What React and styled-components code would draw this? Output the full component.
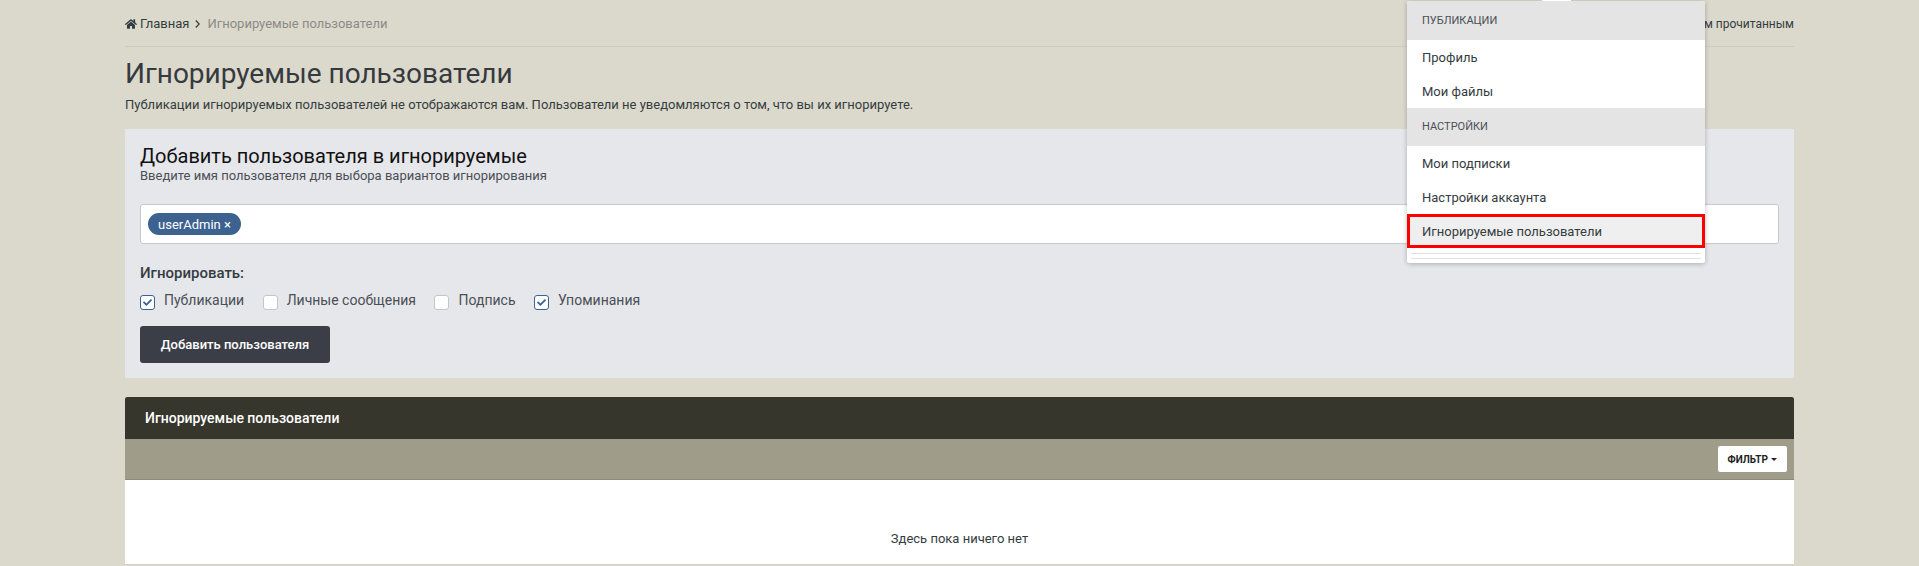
import styled, { createGlobalStyle } from "styled-components";
import { FaHome, FaCheck } from "react-icons/fa";

const GlobalStyle = createGlobalStyle`
  html, body {
    margin: 0;
    height: 566px;
    overflow: hidden;
    background: #dbd9cc;
    font-family: Roboto, "Liberation Sans", sans-serif;
    font-size: 13px;
    color: #353c41;
  }
`;

const Page = styled.div`
  position: relative;
  height: 566px;
  overflow: hidden;
  padding: 0 125px;
`;

const TopBar = styled.div`
  display: flex;
  justify-content: space-between;
  align-items: center;
  height: 47px;
  padding-top: 1px;
  box-sizing: border-box;
  border-bottom: 1px solid #cdcbbe;
`;

const Crumbs = styled.div`
  display: flex;
  align-items: center;
  gap: 3px;
  font-size: 13px;
  svg { font-size: 12px; }
`;

const CrumbSep = styled.svg`
  width: 5px;
  height: 8px;
  margin: 0 4px 0 3px;
  fill: none;
  stroke: #353c41;
  stroke-width: 1.2;
`;

const CrumbCurrent = styled.span`
  color: #8b8b86;
`;

const MarkRead = styled.span`
  font-size: 12px;
`;

const Title = styled.h1`
  margin: 9px 0 0;
  font-size: 28px;
  font-weight: 400;
  line-height: 36px;
  color: #363a3e;
`;

const Lead = styled.p`
  margin: 4px 0 0;
  font-size: 13px;
  line-height: 18px;
`;

const FormPanel = styled.section`
  margin-top: 15px;
  height: 249px;
  box-sizing: border-box;
  padding: 15px;
  background: #e6e7eb;
`;

const FormTitle = styled.h2`
  margin: 0;
  font-size: 20px;
  font-weight: 400;
  line-height: 24px;
  color: #111;
`;

const FormHint = styled.p`
  margin: 0;
  font-size: 13px;
  line-height: 16px;
  color: #4a4f55;
`;

const TagInput = styled.div`
  display: flex;
  align-items: center;
  margin-top: 20px;
  height: 40px;
  box-sizing: border-box;
  padding: 0 7px;
  background: #fff;
  border: 1px solid #c8c9cc;
  border-radius: 3px;
`;

const Tag = styled.span`
  display: inline-flex;
  align-items: center;
  height: 22px;
  padding: 0 10px;
  border-radius: 11px;
  background: #3d628f;
  color: #fff;
  font-size: 13px;
`;

const FieldLabel = styled.div`
  margin-top: 20px;
  font-size: 15px;
  font-weight: 500;
  line-height: 18px;
`;

const Options = styled.div`
  display: flex;
  gap: 18.5px;
  margin-top: 9px;
`;

const Option = styled.label`
  display: flex;
  align-items: center;
  gap: 9px;
  height: 18px;
  font-size: 14px;
  color: #4a4f55;
`;

const Check = styled.span`
  display: flex;
  align-items: center;
  justify-content: center;
  box-sizing: border-box;
  width: 15px;
  height: 15px;
  margin-top: 5px;
  background: #fff;
  border: 1px solid ${(p) => (p.$on ? "#3d628f" : "#c4c5c8")};
  border-radius: 3px;
  color: #3d628f;
  font-size: 9px;
`;

const SubmitButton = styled.button`
  display: block;
  margin-top: 17px;
  width: 190px;
  height: 37px;
  border: 0;
  border-radius: 3px;
  background: #3c3e47;
  color: #fff;
  font-family: inherit;
  font-size: 13px;
  font-weight: 500;
`;

const ListPanel = styled.section`
  margin-top: 19px;
  background: #fff;
  border-bottom: 1px solid #d0d0cc;
`;

const ListHeader = styled.div`
  display: flex;
  align-items: center;
  height: 42px;
  padding: 0 20px;
  border-radius: 2px 2px 0 0;
  background: #37362d;
  color: #fff;
  font-size: 14px;
  font-weight: 500;
`;

const ListToolbar = styled.div`
  display: flex;
  align-items: center;
  justify-content: flex-end;
  height: 41px;
  padding: 0 7px;
  box-sizing: border-box;
  background: #9f9c89;
  border-bottom: 1px solid #8c8a78;
`;

const FilterButton = styled.button`
  display: flex;
  align-items: center;
  gap: 3px;
  height: 26px;
  padding: 0 10px;
  border: 0;
  border-radius: 2px;
  background: #fff;
  color: #222;
  font-family: inherit;
  font-size: 10px;
  font-weight: 700;
`;

const Caret = styled.span`
  width: 0;
  height: 0;
  border-left: 3px solid transparent;
  border-right: 3px solid transparent;
  border-top: 3px solid #222;
`;

const Empty = styled.div`
  height: 84px;
  padding-top: 50px;
  box-sizing: border-box;
  text-align: center;
  font-size: 13px;
  line-height: 18px;
`;

const Menu = styled.nav`
  position: absolute;
  top: 1px;
  left: 1407px;
  width: 298px;
  height: 262px;
  background: #fff;
  border-radius: 2px;
  box-shadow: 0 1px 5px rgba(0, 0, 0, 0.25);
`;

const MenuArrow = styled.span`
  position: absolute;
  top: -1px;
  left: 135px;
  width: 29px;
  height: 1px;
  background: #fff;
`;

const MenuHeading = styled.div`
  display: flex;
  align-items: center;
  height: ${(p) => (p.$first ? "39px" : "38px")};
  padding: 0 15px 1px;
  box-sizing: border-box;
  background: #e4e4e4;
  font-size: 11px;
  color: #4a4f55;
`;

const MenuItem = styled.a`
  display: flex;
  align-items: center;
  height: 34px;
  padding: 0 15px;
  box-sizing: border-box;
  font-size: 13px;
  color: #353c41;
`;

const ActiveItem = styled(MenuItem)`
  padding: 0 12px;
  background: #efefef;
  border: 3px solid #f00;
`;

const MenuRule = styled.div`
  height: 4px;
  margin: 5px 4px 0;
  border-top: 1px solid #e2e2e2;
  border-bottom: 1px solid #e2e2e2;
`;

const options = [
  { label: "Публикации", on: true },
  { label: "Личные сообщения", on: false },
  { label: "Подпись", on: false },
  { label: "Упоминания", on: true },
];

const App = () => {
  return (
    <Page>
      <GlobalStyle />
      <TopBar>
        <Crumbs>
          <FaHome />
          <span>Главная</span>
          <CrumbSep viewBox="0 0 5 8"><path d="M0.8 0.5 L4.2 4 L0.8 7.5" /></CrumbSep>
          <CrumbCurrent>Игнорируемые пользователи</CrumbCurrent>
        </Crumbs>
        <MarkRead>Отметить форум прочитанным</MarkRead>
      </TopBar>

      <Title>Игнорируемые пользователи</Title>
      <Lead>Публикации игнорируемых пользователей не отображаются вам. Пользователи не уведомляются о том, что вы их игнорируете.</Lead>

      <FormPanel>
        <FormTitle>Добавить пользователя в игнорируемые</FormTitle>
        <FormHint>Введите имя пользователя для выбора вариантов игнорирования</FormHint>
        <TagInput>
          <Tag>userAdmin ×</Tag>
        </TagInput>
        <FieldLabel>Игнорировать:</FieldLabel>
        <Options>
          {options.map((o) => (
            <Option key={o.label}>
              <Check $on={o.on}>{o.on && <FaCheck />}</Check>
              {o.label}
            </Option>
          ))}
        </Options>
        <SubmitButton>Добавить пользователя</SubmitButton>
      </FormPanel>

      <ListPanel>
        <ListHeader>Игнорируемые пользователи</ListHeader>
        <ListToolbar>
          <FilterButton>ФИЛЬТР <Caret /></FilterButton>
        </ListToolbar>
        <Empty>Здесь пока ничего нет</Empty>
      </ListPanel>

      <Menu>
        <MenuArrow />
        <MenuHeading $first>ПУБЛИКАЦИИ</MenuHeading>
        <MenuItem>Профиль</MenuItem>
        <MenuItem>Мои файлы</MenuItem>
        <MenuHeading>НАСТРОЙКИ</MenuHeading>
        <MenuItem>Мои подписки</MenuItem>
        <MenuItem>Настройки аккаунта</MenuItem>
        <ActiveItem>Игнорируемые пользователи</ActiveItem>
        <MenuRule />
      </Menu>
    </Page>
  );
};

export default App;
